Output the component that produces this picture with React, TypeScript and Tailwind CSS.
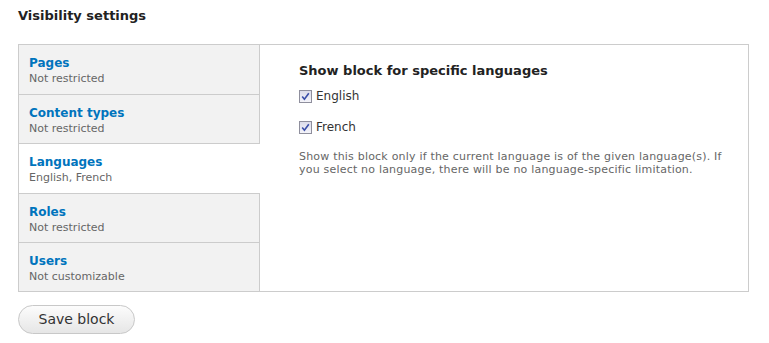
import React from "react";

const TABS = [
  { title: "Pages", summary: "Not restricted" },
  { title: "Content types", summary: "Not restricted" },
  { title: "Languages", summary: "English, French", active: true },
  { title: "Roles", summary: "Not restricted" },
  { title: "Users", summary: "Not customizable" },
];

function Checkbox({ label }: { label: string }) {
  return (
    <label className="flex items-center gap-[4px] text-[12px] text-[#333]">
      <span className="w-[13px] h-[13px] border border-[#8f8f9d] bg-gradient-to-b from-[#dcdcea] to-[#f4f4fa] flex items-center justify-center">
        <svg width="9" height="9" viewBox="0 0 9 9">
          <path d="M1.2 4.6 L3.4 7.2 L7.8 1.2" fill="none" stroke="#3a4ea8" strokeWidth="1.6" />
        </svg>
      </span>
      {label}
    </label>
  );
}

export default function App() {
  return (
    <div className="bg-white w-[769px] h-[343px] font-['DejaVu_Sans',Verdana,sans-serif] text-[#333]">
      <div className="pl-[18px] pt-[7px]">
        <h2 className="text-[13px] font-bold leading-[18px] text-[#222]">Visibility settings</h2>

        <div className="mt-[19px] w-[731px] border border-[#ccc] flex">
          <ul className="w-[241px] shrink-0">
            {TABS.map((tab, i) => (
              <li
                key={tab.title}
                className={`h-[49.2px] pl-[10px] pt-[10px] ${i > 0 ? "border-t border-[#ccc]" : ""} ${
                  tab.active ? "bg-white" : "bg-[#f2f2f2] border-r border-r-[#ccc]"
                }`}
              >
                <p className="text-[12px] font-bold leading-[16px] text-[#0074bd]">{tab.title}</p>
                <p className="text-[11px] leading-[16px] text-[#666]">{tab.summary}</p>
              </li>
            ))}
          </ul>

          <div className="pl-[39px] pt-[18px]">
            <h3 className="text-[13px] font-bold leading-[16px] text-[#222]">Show block for specific languages</h3>
            <div className="mt-[8px] flex flex-col gap-[13px]">
              <Checkbox label="English" />
              <Checkbox label="French" />
            </div>
            <p className="mt-[14px] w-[430px] text-[11px] leading-[13px] tracking-[0.2px] text-[#666]">
              Show this block only if the current language is of the given language(s). If you select no language, there will be no language-specific limitation.
            </p>
          </div>
        </div>

        <button className="mt-[13px] w-[117px] h-[29px] rounded-full border border-[#c8c8c8] bg-gradient-to-b from-[#fcfcfc] to-[#e6e6e6] text-[14px] text-[#333] font-['DejaVu_Sans',Verdana,sans-serif]">
          Save block
        </button>
      </div>
    </div>
  );
}
